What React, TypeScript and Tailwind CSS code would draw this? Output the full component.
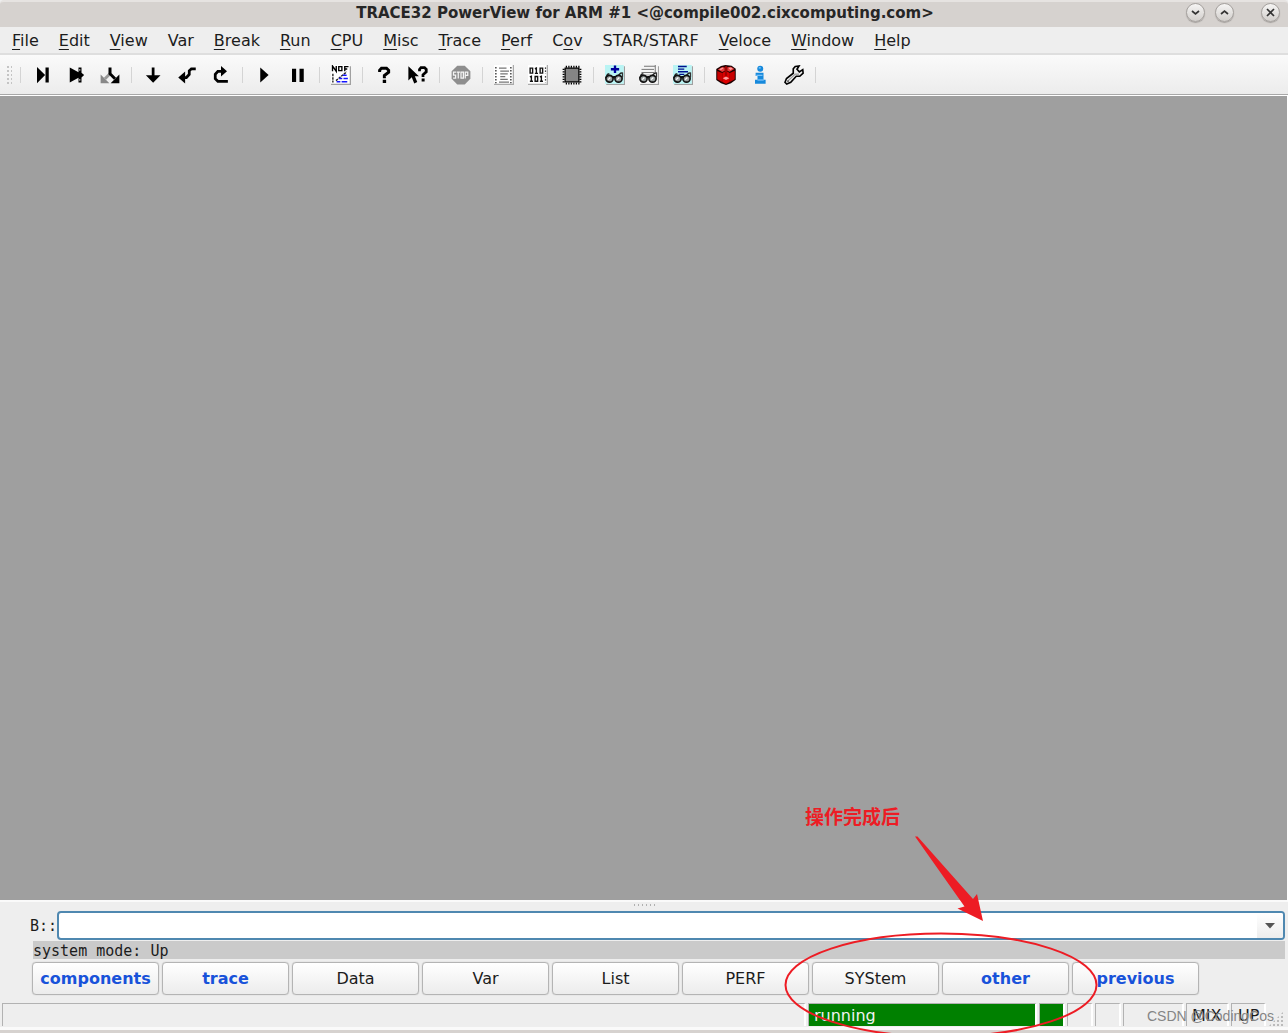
import type { ReactNode } from "react";

function Icon({ children }: { children: ReactNode }) {
  return (
    <svg viewBox="0 0 16 16" className="size-5" aria-hidden="true">
      {children}
    </svg>
  );
}

function Glasses({ paper, children }: { paper: string; children: ReactNode }) {
  return (
    <Icon>
      <path d="M1 15.5H15.5V1" stroke="#a0a0a0" fill="none" />
      <rect x="0" y="0" width="15" height="15" fill={paper} />
      {children}
      <path d="M0.5 10.5L2 7.5L3.5 7M9.5 9.5L12.5 6.6L14 6.3" stroke="#222" strokeWidth="1.1" fill="none" />
      <path d="M5.5 10.3Q7.5 8.8 9.5 10.3" stroke="#000" strokeWidth="1.3" fill="none" />
      <ellipse cx="3.6" cy="11" rx="2.9" ry="2.7" fill="#9aa1a1" stroke="#111" strokeWidth="1.3" />
      <ellipse cx="10.8" cy="11" rx="2.9" ry="2.7" fill="#9aa1a1" stroke="#111" strokeWidth="1.3" />
      <path d="M2.5 11.7L4.3 10M9.7 11.7L11.5 10" stroke="#fff" strokeWidth="1" />
      <path d="M14 6V9.5L13.4 10.5" stroke="#333" strokeWidth="1" fill="none" />
    </Icon>
  );
}

const groups: { label: string; icon: ReactNode }[][] = [
  [
    {
      label: "Step",
      icon: (
        <Icon>
          <path d="M4 1.5L10.5 8L4 14.5zM10.8 2H13.4V14H10.8z" fill="#000" />
        </Icon>
      ),
    },
    {
      label: "Step over",
      icon: (
        <Icon>
          <path d="M3 2L10 5.8V2H12.4V6.2L14.5 8L12.4 10V14H10V10.2L3 14z" fill="#000" />
          <path d="M11 3.2V4.6M11 11.2V12.6" stroke="#aaa" />
        </Icon>
      ),
    },
    {
      label: "Step diverge",
      icon: (
        <Icon>
          <path d="M8 7L4 11" stroke="#999" strokeWidth="2.4" />
          <path d="M0.5 7.5V14.5H7.5z" fill="#888" />
          <path d="M8 2V7L12 11" stroke="#000" strokeWidth="2.4" fill="none" />
          <path d="M15.5 7.5V14.5H8.5z" fill="#000" />
        </Icon>
      ),
    },
  ],
  [
    {
      label: "Go next",
      icon: (
        <Icon>
          <path d="M7 2H9.2V8.2H14L8.1 14.2L2.3 8.2H7z" fill="#000" />
        </Icon>
      ),
    },
    {
      label: "Go return",
      icon: (
        <Icon>
          <path d="M15 3H11.5L9.8 4.7V7.5L7.5 10H5" stroke="#000" strokeWidth="2.2" fill="none" />
          <path d="M1 10L6.5 5.2V14.8z" fill="#000" />
        </Icon>
      ),
    },
    {
      label: "Go up",
      icon: (
        <Icon>
          <path d="M13.5 13H5.5L3.4 11V7.5L5.5 5H9" stroke="#000" strokeWidth="2.2" fill="none" />
          <path d="M8 0.8V9.2L12.8 5z" fill="#000" />
        </Icon>
      ),
    },
  ],
  [
    {
      label: "Go",
      icon: (
        <Icon>
          <path d="M5 2L11.7 8L5 14z" fill="#000" />
        </Icon>
      ),
    },
    {
      label: "Break",
      icon: (
        <Icon>
          <path d="M3.2 3H6.5V13.5H3.2zM9.2 3H12.6V13.5H9.2z" fill="#000" />
        </Icon>
      ),
    },
  ],
  [
    {
      label: "Mode",
      icon: (
        <Icon>
          <rect width="15" height="15" fill="#fff" />
          <path d="M0 15.5H15.5V1" stroke="#a0a0a0" fill="none" />
          <path
            d="M1.2 5V0.8L4.2 5V0.8M6.2 1.3H8.7V4.5H6.2zM11 5V1.3H14M11 3.2H13"
            stroke="#000"
            strokeWidth="1.1"
            fill="none"
          />
          <path d="M1.5 7V14M4 12.5L12.5 5.5" stroke="#222" strokeWidth="1.1" strokeDasharray="2 0.7" />
          <path d="M9.5 8.2H12.5M6.5 10.7H9M10 10.7H13.5M4.5 13.4H7.5M8.5 13.4H13" stroke="#1414ff" strokeWidth="1.2" />
        </Icon>
      ),
    },
  ],
  [
    {
      label: "Help",
      icon: (
        <Icon>
          <path d="M4.5 5.5V4.2L6 2.5H10L11.7 4.2V5.8L8.3 8.4V10.5" stroke="#000" strokeWidth="2.4" fill="none" />
          <path d="M7 11.8H9.7V14.4H7z" fill="#000" />
        </Icon>
      ),
    },
    {
      label: "Context help",
      icon: (
        <Icon>
          <path d="M0.3 1V12.3L3 9.8L5 14.8L7.4 13.6L5.5 9H8.7z" fill="#000" />
          <path d="M9.2 5V3.5L10.4 2H13.2L14.6 3.5V5.5L12 7.8V9.5" stroke="#000" strokeWidth="2.2" fill="none" />
          <path d="M10.9 10.8H13.3V13.2H10.9z" fill="#000" />
        </Icon>
      ),
    },
  ],
  [
    {
      label: "Stop",
      icon: (
        <Icon>
          <path d="M5 0.5H11L15.5 5V11L11 15.5H5L0.5 11V5z" fill="#8e8e8e" />
          <path
            d="M4 5.7H2V8H3.7V10.5H1.7M4.5 5.7H7.1M5.8 5.7V10.8M8 5.7H9.9V10.5H8zM11.4 10.8V5.7H13.4V8.3H11.4"
            stroke="#f4f4f4"
            strokeWidth="1"
            fill="none"
          />
        </Icon>
      ),
    },
  ],
  [
    {
      label: "List",
      icon: (
        <Icon>
          <rect width="15" height="15" fill="#fff" />
          <path d="M0 15.5H15.5V0" stroke="#aaa" fill="none" />
          <path d="M4 2.5H10M5 4.8H12M5 7H11M5 9.2H9M5 11.4H11M4 13.6H12" stroke="#777" strokeWidth="1" />
          <path d="M1.5 1.5V14.5M13.5 1.5V14.5" stroke="#222" strokeWidth="1" strokeDasharray="1.2 1.2" />
        </Icon>
      ),
    },
    {
      label: "Data dump",
      icon: (
        <Icon>
          <rect width="15" height="15" fill="#fff" />
          <path d="M0 15.5H15.5V0" stroke="#aaa" fill="none" />
          <path
            d="M1.7 2.5H3.7V6.5H1.7zM5.5 3L6.7 2.5V7M5.5 6.7H8M9.7 2.5H11.7V6.5H9.7zM1.5 9.5L2.7 9V13.2M1.5 13H4M5.7 9.2H7.7V13H5.7zM9.5 9.5L10.7 9V13.2M9.5 13H12"
            stroke="#111"
            strokeWidth="1.1"
            fill="none"
          />
          <path d="M14 2V7M14 9V14" stroke="#111" strokeDasharray="1 1.4" />
        </Icon>
      ),
    },
    {
      label: "Registers",
      icon: (
        <Icon>
          <path
            d="M3 1.3H14M3 14.7H14M1.3 3V14M14.7 3V14"
            stroke="#000"
            strokeWidth="1.6"
            strokeDasharray="1 1"
          />
          <rect x="2.5" y="2.5" width="11" height="11" fill="#858585" stroke="#000" />
        </Icon>
      ),
    },
  ],
  [
    {
      label: "Watch variable",
      icon: (
        <Glasses paper="#b9f4f4">
          <path d="M4.7 3.4H11.3M8 0.4V6.4" stroke="#00009a" strokeWidth="1.9" />
        </Glasses>
      ),
    },
    {
      label: "View locals",
      icon: (
        <Glasses paper="#f5f5f5">
          <path d="M4 1H13M2 3.5H12M2 6H12M13 0V6" stroke="#777" strokeWidth="0.8" />
          <path d="M1 8H10" stroke="#aaa" strokeWidth="0.8" />
        </Glasses>
      ),
    },
    {
      label: "View stack",
      icon: (
        <Glasses paper="#b9f4f4">
          <path d="M4 1.2H11M4 3.3H9M4 5.4H12M5 7.5H9" stroke="#00108e" strokeWidth="1.1" />
        </Glasses>
      ),
    },
  ],
  [
    {
      label: "Trace32",
      icon: (
        <Icon>
          <path d="M0.2 3.2L4 0.8L7.5 0L12.5 0.6L15.8 3V11.8L12 14.5L8 16L4 14.5L0.2 12z" fill="#1c0000" />
          <path d="M1 4.8L5 6.4V13.6L1 11.4zM11 6.4L15 4.6V11.3L11 13.6z" fill="#c80000" />
          <path d="M1.5 3.5L5 1.5L7 2V4.6L5 5.6zM9 1.8L12 1.3L14.7 3.2L11 5.4L9 4.6z" fill="#e83a3a" />
          <path d="M2.5 3.3L5 2.2L6 2.6L4 4zM10 2.3L12 2L13.4 3L11.4 4z" fill="#ffa0a0" />
          <path d="M5 6.4L8 4.6L11 6.4V13.6L8 15L5 13.6z" fill="#dc0000" />
          <path d="M5.4 10.6L8 9.2L10.6 10.6L8 12z" fill="#ff9a9a" />
          <path d="M8 1V9" stroke="#a00000" strokeWidth="1.8" />
        </Icon>
      ),
    },
    {
      label: "Information",
      icon: (
        <Icon>
          <circle cx="8.2" cy="3" r="2.4" fill="#1689dc" />
          <path d="M4.5 6.2H10.8V11.8H12.5V15H4V11.8H6V8.8H4.5z" fill="#1689dc" />
          <path d="M5 8.2H10M6 12H11" stroke="#9bd4ff" strokeWidth="0.9" />
          <path d="M7 2.3H8.6" stroke="#8dd0ff" />
        </Icon>
      ),
    },
    {
      label: "Settings",
      icon: (
        <Icon>
          <path
            d="M9 1.2L12 0.8L10.4 3.4L12.3 5.5L15 3.7L15.3 6.5L12.6 9H9.8L5.4 13.8L2.2 15.2L0.8 13.8L2 10.8L7.4 6.6V3z"
            fill="#eee"
            stroke="#000"
            strokeWidth="1.3"
          />
          <path d="M3.4 12.5L9 7.3H12" stroke="#999" strokeWidth="1" fill="none" />
          <circle cx="3.2" cy="12.8" r="0.7" fill="#333" />
        </Icon>
      ),
    },
  ],
];

const menus: [string, string, string][] = [
  ["", "F", "ile"],
  ["", "E", "dit"],
  ["", "V", "iew"],
  ["Var", "", ""],
  ["", "B", "reak"],
  ["", "R", "un"],
  ["", "C", "PU"],
  ["", "M", "isc"],
  ["", "T", "race"],
  ["", "P", "erf"],
  ["C", "o", "v"],
  ["STAR/STARF", "", ""],
  ["", "V", "eloce"],
  ["", "W", "indow"],
  ["", "H", "elp"],
];

const softkeys = [
  { text: "components", strong: true },
  { text: "trace", strong: true },
  { text: "Data" },
  { text: "Var" },
  { text: "List" },
  { text: "PERF" },
  { text: "SYStem" },
  { text: "other", strong: true },
  { text: "previous", strong: true },
];

function WindowButton({ label, d }: { label: string; d: string }) {
  return (
    <button
      aria-label={label}
      className="flex size-[19px] items-center justify-center rounded-full border border-[#a5a19e] bg-linear-to-b from-[#f6f5f4] to-[#d2cfcc] shadow-[0_1px_1px_#a5a19e]"
    >
      <svg viewBox="0 0 9 9" className="size-[9px]" aria-hidden="true">
        <path d={d} stroke="#333" strokeWidth="1.7" fill="none" />
      </svg>
    </button>
  );
}

function Separator() {
  return <div className="mx-1 h-4 w-px shrink-0 bg-[#d4d4d4]" />;
}

const cell = "h-[23px] shrink-0 border-t border-l border-[#b2b2b2] border-r-2 border-r-white";

export default function App() {
  return (
    <div className="relative flex min-h-screen flex-col overflow-hidden bg-[#eeeeee] font-['DejaVu_Sans',sans-serif] text-[16px] leading-5 text-[#1c1c1c]">
      <header className="flex h-[27px] items-center rounded-t-sm border-t-2 border-[#e6e3e1] bg-[#d6d2cf] pb-1">
        <div className="w-[110px]" />
        <h1 className="flex-1 pl-0.5 text-center text-[15px] font-bold text-[#262626]">
          TRACE32 PowerView for ARM #1 &lt;@compile002.cixcomputing.com&gt;
        </h1>
        <div className="flex w-[110px] items-center justify-end gap-2.5 pr-2">
          <WindowButton label="Minimize" d="M1 3L4.5 6L8 3" />
          <WindowButton label="Maximize" d="M1 6L4.5 3L8 6" />
          <div className="w-[7px]" />
          <WindowButton label="Close" d="M1 1L8 8M8 1L1 8" />
        </div>
      </header>

      <nav className="flex h-7 items-center border-b-2 border-[#dedede] px-0.5 pt-0.5">
        {menus.map(([before, key, after]) => (
          <button key={before + key + after} className="px-2.5 whitespace-nowrap">
            {before}
            <span className="underline decoration-1 underline-offset-3">{key}</span>
            {after}
          </button>
        ))}
      </nav>

      <div className="flex h-10 items-center border-b border-[#a8a8a8] bg-linear-to-b from-[#fafafa] to-[#ececec] pl-1.5">
        <div className="mr-1 h-5 w-1.5 bg-[radial-gradient(#c4c4c4_1px,transparent_1px)] bg-size-[4px_4px]" />
        {groups.map((group, i) => (
          <div key={i} className="flex items-center">
            <Separator />
            {group.map((tool) => (
              <button key={tool.label} aria-label={tool.label} className="flex h-8 w-[34px] items-center justify-center">
                {tool.icon}
              </button>
            ))}
          </div>
        ))}
        <Separator />
      </div>

      <main className="flex-1 border-t border-r border-b-2 border-white bg-[#9f9f9f] border-b-[#fafafa]" />

      <footer>
        <div className="flex h-[9px] items-start justify-center pt-0.5">
          <div className="h-0.5 w-[21px] bg-[linear-gradient(90deg,#b0b0b0_1px,transparent_1px)] bg-size-[4px_2px]" />
        </div>
        <div className="flex items-center pr-[3px] pl-[30px]">
          <label htmlFor="command" className="w-[27px] shrink-0 font-['DejaVu_Sans_Mono',monospace] text-[15px]">
            B::
          </label>
          <div className="flex h-[29px] flex-1 overflow-hidden rounded-[4px] border-2 border-[#4f88b0] bg-white">
            <input id="command" className="min-w-0 flex-1 px-1 font-['DejaVu_Sans_Mono',monospace] text-[15px] outline-none" />
            <button aria-label="Command history" className="flex w-[26px] items-center justify-center bg-linear-to-b from-white to-[#ededed]">
              <svg viewBox="0 0 10 6" className="h-1.5 w-2.5" aria-hidden="true">
                <path d="M0 0H10L5 5.5z" fill="#555" />
              </svg>
            </button>
          </div>
        </div>
        <p className="mt-px mr-[3px] ml-[33px] h-[18px] bg-[#cacaca] font-['DejaVu_Sans_Mono',monospace] text-[15px]">
          system mode: Up
        </p>
        <div className="mt-[3px] ml-8 flex gap-[3px]">
          {softkeys.map((key) => (
            <button
              key={key.text}
              className={
                "h-[33px] w-[127px] rounded-[4px] border border-[#b4b4b4] bg-linear-to-b from-white to-[#ececec] shadow-[0_0_1px_#a8a8a8] " +
                (key.strong ? "font-bold text-[#1852da]" : "")
              }
            >
              {key.text}
            </button>
          ))}
        </div>

        <div className="mt-2 flex gap-0.5 border-b-[3px] border-[#fafafa] pl-0.5 leading-[23px]">
          <div className={cell + " flex-1"} />
          <div className={cell + " w-[229px] bg-[#008000] pl-[5px] text-[#f2f2f2]"}>running</div>
          <div className={cell + " w-[26px] bg-[#008000]"} />
          <div className={cell + " w-[26px]"} />
          <div className={cell + " w-[26px]"} />
          <div className={cell + " w-[61px]"} />
          <div className={cell + " w-[43px] pl-[5px]"}>MIX</div>
          <div className={cell + " w-[35px] pl-1.5"}>UP</div>
          <div className="mt-2 mr-1 h-4 w-4 bg-[radial-gradient(#bbb_1px,transparent_1px)] bg-size-[4px_4px] [clip-path:polygon(100%_0,100%_100%,0_100%)]" />
        </div>
        <div className="h-[3px] bg-[#d6d2cf]" />
      </footer>

      <div className="pointer-events-none absolute right-0 bottom-0 h-[240px] w-[520px]">
        <p className="absolute top-[11px] left-[37px] font-['Noto_Sans_CJK_SC',sans-serif] text-[19px] leading-6 font-bold text-[#ed1c24]">
          操作完成后
        </p>
        <svg viewBox="0 0 520 240" className="absolute inset-0 size-full" aria-hidden="true">
          <ellipse cx="173" cy="192" rx="155.5" ry="51.5" fill="none" stroke="#ed1c24" strokeWidth="2" />
          <path d="M147 43.5L149.5 43.5L205 106L209 101L215 128L189.5 115.5L196.5 113.5Z" fill="#ed1c24" />
        </svg>
        <p className="absolute right-[14px] bottom-2 font-['Liberation_Sans',sans-serif] text-[14px] leading-[18px] whitespace-nowrap text-[#858585]">
          CSDN @CodingCos
        </p>
      </div>
    </div>
  );
}
